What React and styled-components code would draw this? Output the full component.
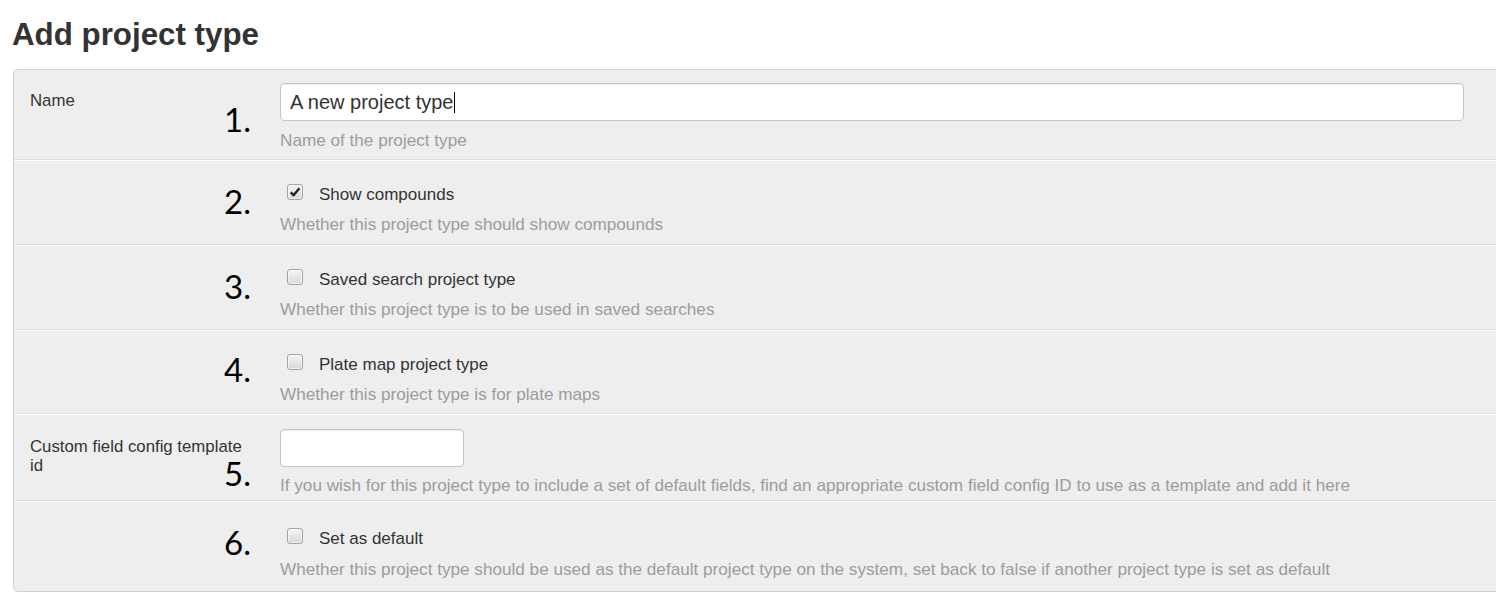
import React from "react";
import styled, { createGlobalStyle } from "styled-components";

const Global = createGlobalStyle`
  html, body { margin: 0; padding: 0; background: #fff; }
  body { font-family: "Liberation Sans", Arial, sans-serif; color: #333; overflow: hidden; }
`;

const Page = styled.div`
  padding: 17px 0 0 13px;
  width: 1496px;
  box-sizing: border-box;
  overflow: hidden;
`;

const Title = styled.h2`
  margin: 0 0 16px -1px;
  font-family: "Liberation Sans", Arial, sans-serif;
  font-size: 31.3px;
  line-height: 36px;
  font-weight: bold;
  color: #333;
`;

const Panel = styled.div`
  width: 1500px;
  background: #eeeeee;
  border: 1px solid #d0d0d0;
  border-radius: 5px;
  box-shadow: 0 1px 1px rgba(0, 0, 0, 0.05);
`;

const Row = styled.div`
  position: relative;
  display: grid;
  grid-template-columns: 220px 1fr;
  column-gap: 30px;
  padding: ${(p) => p.$pt ?? 13}px 16px ${(p) => p.$pb ?? 8}px 16px;
  border-top: 1px solid #ffffff;
  border-bottom: 1px solid #dddddd;
  &:first-child { border-top: none; }
  &:last-child { border-bottom: none; }
`;

const Label = styled.div`
  padding-top: 8px;
  font-size: 16.8px;
  line-height: 19px;
  color: #333;
`;

const Controls = styled.div`
  display: flex;
  flex-direction: column;
  align-items: flex-start;
`;

const Marker = styled.div`
  position: absolute;
  left: 210px;
  top: ${(p) => p.$top}px;
  font-family: Lato, "Open Sans", sans-serif;
  font-size: 33px;
  line-height: 33px;
  color: #000;
`;

const TextBox = styled.div`
  box-sizing: border-box;
  width: ${(p) => p.$w}px;
  height: ${(p) => p.$h}px;
  background: #fff;
  border: 1px solid #c4c4c4;
  border-radius: 4px;
  box-shadow: inset 0 1px 1px rgba(0, 0, 0, 0.075);
  padding: 0 9px;
  display: flex;
  align-items: center;
  font-size: 20px;
  color: #333;
`;

const Caret = styled.span`
  display: inline-block;
  width: 1px;
  height: 21px;
  background: #000;
  margin-left: 1px;
`;

const Help = styled.div`
  margin-top: ${(p) => p.$mt ?? 7}px;
  font-size: 17.15px;
  line-height: 24px;
  color: #9c9c9c;
  white-space: nowrap;
`;

const CheckLine = styled.label`
  display: flex;
  align-items: center;
  margin-top: ${(p) => p.$mt ?? 9}px;
  margin-left: 7px;
  height: 24px;
  font-size: 17px;
  color: #333;
`;

const Box = styled.span`
  box-sizing: border-box;
  width: 16px;
  height: 16px;
  margin-right: 16px;
  margin-top: -7px;
  border: 1px solid #a4a4a4;
  border-radius: 3px;
  background: linear-gradient(#f4f4f4, #d9d9d9);
  box-shadow: inset 0 0 0 1px rgba(255, 255, 255, 0.55);
  display: flex;
  align-items: center;
  justify-content: center;
`;

function Checkbox({ checked, mt, children }) {
  return (
    <CheckLine $mt={mt}>
      <Box role="checkbox" aria-checked={!!checked}>
        {checked && (
          <svg width="12" height="12" viewBox="0 0 12 12">
            <path d="M1.8 6.3 L4.6 9.2 L10.4 2.2" fill="none" stroke="#222" strokeWidth="2.4" strokeLinejoin="round" />
          </svg>
        )}
      </Box>
      {children}
    </CheckLine>
  );
}

export default function App() {
  return (
    <Page>
      <Global />
      <Title>Add project type</Title>
      <Panel>
        <Row $pb={7}>
          <Label>Name</Label>
          <Controls>
            <TextBox $w={1184} $h={38}>
              A new project type<Caret />
            </TextBox>
            <Help>Name of the project type</Help>
          </Controls>
          <Marker $top={33}>1.</Marker>
        </Row>
        <Row>
          <Label />
          <Controls>
            <Checkbox checked>Show compounds</Checkbox>
            <Help $mt={5}>Whether this project type should show compounds</Help>
          </Controls>
          <Marker $top={24}>2.</Marker>
        </Row>
        <Row>
          <Label />
          <Controls>
            <Checkbox>Saved search project type</Checkbox>
            <Help $mt={5}>Whether this project type is to be used in saved searches</Help>
          </Controls>
          <Marker $top={24}>3.</Marker>
        </Row>
        <Row $pb={7}>
          <Label />
          <Controls>
            <Checkbox>Plate map project type</Checkbox>
            <Help $mt={5}>Whether this project type is for plate maps</Help>
          </Controls>
          <Marker $top={22}>4.</Marker>
        </Row>
        <Row $pt={14} $pb={3}>
          <Label>Custom field config template id</Label>
          <Controls>
            <TextBox $w={184} $h={38} />
            <Help $mt={6}>
              If you wish for this project type to include a set of default fields, find an appropriate custom field config ID to use as a template and add it here
            </Help>
          </Controls>
          <Marker $top={42}>5.</Marker>
        </Row>
        <Row $pb={10}>
          <Label />
          <Controls>
            <Checkbox mt={12}>Set as default</Checkbox>
            <Help $mt={6}>
              Whether this project type should be used as the default project type on the system, set back to false if another project type is set as default
            </Help>
          </Controls>
          <Marker $top={24}>6.</Marker>
        </Row>
      </Panel>
    </Page>
  );
}
